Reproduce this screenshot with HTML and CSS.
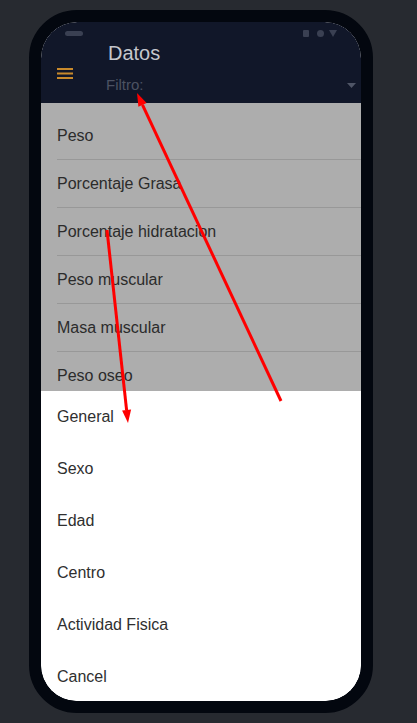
FILE: index.html
```html
<!DOCTYPE html>
<html lang="es">
<head>
<meta charset="utf-8">
<title>Datos</title>
<link rel="stylesheet" href="styles.css">
</head>
<body>
<div class="phone">
  <div class="screen">
    <header class="header">
      <div class="status">
        <span class="pill"></span>
        <div class="status-icons">
          <span class="sq"></span>
          <span class="dot"></span>
          <svg class="tri" width="8" height="7" viewBox="0 0 8 7"><polygon points="0,0 8,0 4,7" fill="#3a4052"/></svg>
        </div>
      </div>
      <div class="toolbar">
        <svg class="menu" width="16" height="11" viewBox="0 0 16 11">
          <rect x="0" y="0" width="16" height="2" fill="#c98a2b"/>
          <rect x="0" y="4.5" width="16" height="2" fill="#c98a2b"/>
          <rect x="0" y="9" width="16" height="2" fill="#c98a2b"/>
        </svg>
        <div class="titles">
          <div class="title">Datos</div>
          <div class="filter">
            <span class="filter-label">Filtro:</span>
            <svg class="caret" width="9" height="5" viewBox="0 0 9 5"><polygon points="0,0 9,0 4.5,5" fill="#4f5566"/></svg>
          </div>
        </div>
      </div>
    </header>
    <div class="list">
      <div class="item">Peso</div>
      <div class="item">Porcentaje Grasa</div>
      <div class="item">Porcentaje hidratacion</div>
      <div class="item">Peso muscular</div>
      <div class="item">Masa muscular</div>
      <div class="item">Peso oseo</div>
    </div>
    <div class="sheet">
      <div class="sheet-btn">General</div>
      <div class="sheet-btn">Sexo</div>
      <div class="sheet-btn">Edad</div>
      <div class="sheet-btn">Centro</div>
      <div class="sheet-btn">Actividad Fisica</div>
      <div class="sheet-btn">Cancel</div>
    </div>
  </div>
</div>
<svg class="annotations" width="417" height="723" viewBox="0 0 417 723">
  <line x1="281" y1="401" x2="142.5" y2="104.8" stroke="#ff0000" stroke-width="3"/>
  <polygon points="137,93 146.6,102.9 138.4,106.7" fill="#ff0000"/>
  <line x1="107" y1="230" x2="126.6" y2="410.1" stroke="#ff0000" stroke-width="3"/>
  <polygon points="128,423 122.1,410.6 131.1,409.6" fill="#ff0000"/>
</svg>
</body>
</html>
```
FILE: styles.css
```css
* { box-sizing: border-box; }

html, body {
  margin: 0;
  padding: 0;
}

body {
  background: #272a30;
  width: 417px;
  height: 723px;
  overflow: hidden;
  font-family: "Liberation Sans", Arial, sans-serif;
  position: relative;
}

.phone {
  margin: 10px 0 0 29px;
  width: 344px;
  height: 703px;
  border: 12px solid #03070f;
  border-radius: 48px;
  background: #03070f;
  overflow: hidden;
}

.screen {
  display: flex;
  flex-direction: column;
  height: 100%;
  border-radius: 36px;
  overflow: hidden;
  background: #ffffff;
}

.header {
  background: #111729;
  height: 81px;
  flex: none;
}

.status {
  height: 19px;
  padding: 9px 24px 0 24px;
  display: flex;
  justify-content: space-between;
  align-items: flex-start;
}

.pill {
  width: 18px;
  height: 5px;
  border-radius: 3px;
  background: #3a4052;
}

.status-icons {
  display: flex;
  align-items: center;
  margin-top: -1px;
}

.sq {
  width: 6px;
  height: 7px;
  background: #3a4052;
  border-radius: 1px;
}

.dot {
  width: 7px;
  height: 7px;
  border-radius: 50%;
  background: #3a4052;
  margin-left: 8px;
}

.tri {
  display: block;
  margin-left: 5px;
}

.toolbar {
  display: flex;
  align-items: flex-start;
  padding-left: 16px;
}

.menu {
  display: block;
  margin-top: 27px;
  flex: none;
}

.titles {
  flex: 1;
  margin-left: 33px;
}

.title {
  font-size: 20px;
  line-height: 24px;
  color: #c5c7cd;
  padding-left: 2px;
}

.filter {
  margin-top: 10px;
  height: 20px;
  display: flex;
  justify-content: space-between;
  align-items: center;
  padding-right: 5px;
}

.filter-label {
  font-size: 15px;
  line-height: 20px;
  color: #4c5262;
}

.caret {
  display: block;
  margin-top: 1px;
}

.list {
  height: 288px;
  flex: none;
  overflow: hidden;
  background: #adadad;
  padding-top: 9px;
}

.item {
  height: 48px;
  margin-left: 16px;
  border-bottom: 1px solid #989898;
  display: flex;
  align-items: center;
  font-size: 16px;
  color: #2b2b2b;
}

.sheet {
  flex: 1;
  background: #ffffff;
}

.sheet-btn {
  height: 52px;
  padding-left: 16px;
  display: flex;
  align-items: center;
  font-size: 16px;
  color: #2f2f2f;
}

.annotations {
  position: absolute;
  top: 0;
  left: 0;
  pointer-events: none;
}
```
